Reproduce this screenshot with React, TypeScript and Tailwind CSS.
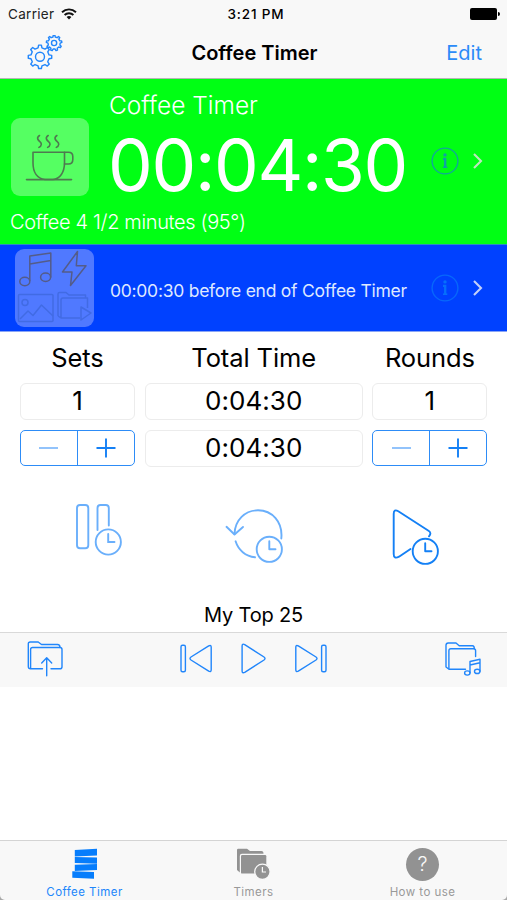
import type { ReactNode } from "react";

const BLUE = "#2186fb";

function gearPath(cx: number, cy: number, outer: number, inner: number, teeth: number) {
  const pts: string[] = [];
  const step = (Math.PI * 2) / teeth;
  const at = (r: number, a: number) => `${(cx + r * Math.cos(a)).toFixed(2)} ${(cy + r * Math.sin(a)).toFixed(2)}`;
  for (let i = 0; i < teeth; i++) {
    const a = i * step - Math.PI / 2;
    pts.push(at(inner, a - step * 0.27), at(outer, a - step * 0.15), at(outer, a + step * 0.15), at(inner, a + step * 0.27));
  }
  return `M${pts.join("L")}Z`;
}

function GearsIcon() {
  return (
    <svg width="36" height="36" viewBox="27 34 36 36" fill="none" stroke={BLUE} strokeWidth="1.4" strokeLinejoin="round">
      <path d={gearPath(40, 55.8, 11.8, 9.2, 8)} />
      <circle cx="40" cy="55.8" r="4.5" />
      <path d={gearPath(54.1, 42, 7.8, 6.1, 9)} />
      <circle cx="54.1" cy="42" r="2.6" />
    </svg>
  );
}

function WifiIcon() {
  return (
    <svg width="16" height="12" viewBox="0 0 16 12" fill="none" stroke="#111" strokeWidth="1.9">
      <path d="M1 4.2C5 .4 11 .4 15 4.2" />
      <path d="M3.6 7C6 4.6 10 4.6 12.4 7" />
      <path d="M8 11.4 5.6 9C7 7.7 9 7.7 10.4 9Z" fill="#111" stroke="none" />
    </svg>
  );
}

function CoffeeIcon() {
  return (
    <svg width="78" height="78" viewBox="0 0 78 78" fill="none" stroke="#4f7a50" strokeWidth="1.6" strokeLinecap="round" strokeLinejoin="round">
      <path d="M22 34.2H53.5V45C53.5 54 49 61 42 61.5H34C26 60.5 22 54 22 45Z" />
      <path d="M53.5 34.2H57.5Q61.8 34.2 61.8 38.5V41.5Q61.8 46 57.5 46H53.5" />
      <path d="M15.5 61.6H60.5" />
      <path d="M28.5 17.5c-3.8 2.5-1 5 .6 6.3s2 4-1.2 5.6" />
      <path d="M37.2 17.5c-3.8 2.5-1 5 .6 6.3s2 4-1.2 5.6" />
      <path d="M45.9 17.5c-3.8 2.5-1 5 .6 6.3s2 4-1.2 5.6" />
    </svg>
  );
}

function MediaIcon() {
  return (
    <svg width="79" height="78" viewBox="0 0 79 78" fill="none" strokeWidth="1.5" strokeLinejoin="round">
      <g stroke="#545c88">
        <ellipse cx="9.8" cy="32.5" rx="5" ry="4.2" />
        <ellipse cx="30.6" cy="28.3" rx="5" ry="4.2" />
        <path d="M14.8 32V7L35.8 4V28.5M14.8 15L35.8 11.6" />
        <path d="M62.5 2.5 47.5 23H57L55.5 36.5 71 16.8H61.3Z" />
      </g>
      <g stroke="#416be4">
        <rect x="3.5" y="45.5" width="34.5" height="27" rx="1" />
        <circle cx="10" cy="53.5" r="3" />
        <path d="M5 70 13 62 18 66.5 26.5 56 38 67" />
        <path d="M43 67V45Q43 43.5 44.5 43.5H51L54 46H70.5V49H48Q46 49 46 51V69H65M43 67 46 69M70.5 49H72.5V59" />
        <path d="M66 58 76 64 66 71Z" />
      </g>
    </svg>
  );
}

function InfoIcon({ ring, mark }: { ring: string; mark: string }) {
  return (
    <svg width="28" height="28" viewBox="0 0 28 28" fill="none">
      <circle cx="14" cy="14" r="12.9" stroke={ring} strokeWidth="1.4" />
      <circle cx="14" cy="7.9" r="1.7" fill={mark} />
      <path d="M12 11.9H14.2V20.4" stroke={mark} strokeWidth="2.3" />
      <path d="M12 20.2H16.3" stroke={mark} strokeWidth="1.6" />
    </svg>
  );
}

function Chevron({ color }: { color: string }) {
  return (
    <svg width="12" height="18" viewBox="0 0 12 18" fill="none" stroke={color} strokeWidth="2.1">
      <path d="M2 2 9 9 2 16" />
    </svg>
  );
}

function PauseTimerIcon() {
  return (
    <svg width="48" height="54" viewBox="75 502 48 54" fill="none" stroke="#6aaffb" strokeWidth="1.9" strokeLinecap="round">
      <rect x="77" y="505" width="11.3" height="43.2" rx="3" />
      <path d="M97.5 530V508Q97.5 505 100.5 505H105.8Q108.8 505 108.8 508V525.5" />
      <circle cx="108.3" cy="542" r="12.6" />
      <path d="M108.2 534V542H114.5" />
    </svg>
  );
}

function ResetTimerIcon() {
  return (
    <svg width="60" height="56" viewBox="225 508 60 56" fill="none" stroke="#6aaffb" strokeWidth="1.9" strokeLinecap="round" strokeLinejoin="round">
      <path d="M234.5 534C235 520 245 510.3 258 510.3C272 510.3 283 522 281.3 538.5" />
      <path d="M226.5 526.8 234.5 534.5 243 527" />
      <path d="M235.6 541.3C238.3 550 245.5 556.3 255 557.3" />
      <circle cx="269.3" cy="549.3" r="12.6" />
      <path d="M269.3 541.3V549.3H275.5" />
    </svg>
  );
}

function PlayTimerIcon() {
  return (
    <svg width="50" height="58" viewBox="391 508 50 58" fill="none" stroke="#1480f5" strokeWidth="1.9" strokeLinecap="round" strokeLinejoin="round">
      <path d="M410.5 549 399 556.7Q393.7 559.5 393.7 554V514Q393.7 508.6 398.3 511.3L428.5 530.8Q432 533 429 536.3" />
      <circle cx="425.3" cy="551.3" r="12.6" />
      <path d="M425.2 543.3V551.3H431.5" />
    </svg>
  );
}

function UploadFolderIcon() {
  return (
    <svg width="38" height="38" viewBox="26 640 38 38" fill="none" stroke={BLUE} strokeWidth="1.4" strokeLinecap="round" strokeLinejoin="round">
      <path d="M42.5 668.8H30.5Q28.3 668.8 28.3 666.5V643.8Q28.3 642 30.2 642H38.2L41.5 644.5H57.5Q60 644.5 60 647.5" />
      <path d="M30.6 668V649.5Q30.6 647.5 32.6 647.5H60Q62 647.5 62 649.5V666.7Q62 668.8 60 668.8H51" />
      <path d="M46.7 675.8V658M41.7 663 46.7 657.8 51.7 663" />
    </svg>
  );
}

function PreviousIcon() {
  return (
    <svg width="34" height="30" viewBox="180 644 34 30" fill="none" stroke={BLUE} strokeWidth="1.4" strokeLinejoin="round">
      <rect x="182" y="645.3" width="4.4" height="26.4" rx="1.5" />
      <path d="M209.7 645.9 192 657Q190 658.5 192 660L209.7 671.2Q212.2 672.5 212.2 669.7V647.2Q212.2 644.6 209.7 645.9Z" />
    </svg>
  );
}

function PlayIcon() {
  return (
    <svg width="27" height="32" viewBox="241 643 27 32" fill="none" stroke={BLUE} strokeWidth="1.4" strokeLinejoin="round">
      <path d="M245.7 644.6 265 657Q267 658.5 265 660L245.7 672.4Q243.1 673.6 243.1 671V646Q243.1 643.3 245.7 644.6Z" />
    </svg>
  );
}

function NextIcon() {
  return (
    <svg width="34" height="30" viewBox="294 644 34 30" fill="none" stroke={BLUE} strokeWidth="1.4" strokeLinejoin="round">
      <path d="M298.3 645.9 316 657Q318 658.5 316 660L298.3 671.2Q295.8 672.5 295.8 669.7V647.2Q295.8 644.6 298.3 645.9Z" />
      <rect x="321.6" y="645.3" width="4.4" height="26.4" rx="1.5" />
    </svg>
  );
}

function MusicFolderIcon() {
  return (
    <svg width="40" height="38" viewBox="443 640 40 38" fill="none" stroke={BLUE} strokeWidth="1.4" strokeLinecap="round" strokeLinejoin="round">
      <path d="M465.5 669.3H449L446 667V645.3Q446 643 448.3 643H456L459.2 645.7H472.5Q474.3 645.7 474.3 648.7" />
      <path d="M448.9 668.5V650.7Q448.9 648.7 450.9 648.7H473.6Q475.6 648.7 475.6 650.7V656.5" />
      <path d="M470 672.8V661.5L480 659.3V671.2M470 665 480 662.8" />
      <ellipse cx="467.3" cy="673" rx="2.7" ry="2.1" />
      <ellipse cx="477.2" cy="671.4" rx="2.7" ry="2.1" />
    </svg>
  );
}

function StackIcon() {
  return (
    <svg width="28" height="32" viewBox="70 847 28 32" fill="#067dfc">
      <path d="M73.8 849 96 847.8V854.4L73.8 855.4Z" />
      <path d="M73.8 855.9 96 856.5V862.7L73.8 861.9Z" />
      <path d="M73.8 863.8 96 862.9V869L73.8 870Z" />
      <path d="M71.3 870.3 93 871.1V877.8L71.3 876.8Z" />
    </svg>
  );
}

function TimersIcon() {
  return (
    <svg width="34" height="34" viewBox="237 847 34 34" fill="#929292">
      <path d="M237 850Q237 848.7 238.3 848.7H247L250 851H261.5Q263.5 851 263.5 853.8H242Q239.8 853.8 239.8 856V872.5L237 870Z" />
      <rect x="241" y="855" width="25.3" height="18.6" rx="1.2" />
      <circle cx="262.4" cy="871.8" r="7.7" stroke="#f8f8f8" strokeWidth="1.3" />
      <path d="M262.4 867V872H266" fill="none" stroke="#f8f8f8" strokeWidth="1.2" />
    </svg>
  );
}

function HelpIcon() {
  return (
    <div className="flex h-[33px] w-[33px] items-center justify-center rounded-full bg-[#929292] text-[20px] font-light text-[#f8f8f8]">
      ?
    </div>
  );
}

function Heading({ children }: { children: ReactNode }) {
  return <div className="h-[34px] text-center text-[25.5px] leading-[38px] tracking-[-0.1px]">{children}</div>;
}

function Field({ children }: { children: ReactNode }) {
  return (
    <div className="flex h-[37px] items-center justify-center rounded-[6px] border border-[#ececec] pb-[2px] text-[26px] tracking-[0.05px]">
      {children}
    </div>
  );
}

function Stepper() {
  return (
    <div className="grid h-[36px] grid-cols-2 rounded-[5px] border-[1.5px] border-[#2d8cf7] text-[#1480f5]">
      <button className="flex items-center justify-center border-r border-[#2d8cf7]">
        <span className="h-[2px] w-[19px] bg-[#92c3fb]" />
      </button>
      <button className="flex items-center justify-center">
        <svg width="20" height="20" viewBox="0 0 20 20" stroke="currentColor" strokeWidth="1.9">
          <path d="M.5 10H19.5M10 .5V19.5" />
        </svg>
      </button>
    </div>
  );
}

function Tab({ icon, label, className }: { icon: ReactNode; label: string; className: string }) {
  return (
    <div className={`flex flex-col items-center ${className}`}>
      <div className="flex h-[36px] items-center justify-center">{icon}</div>
      <span className="mt-[2px] text-[11.5px] leading-[16px] tracking-[0.45px]">{label}</span>
    </div>
  );
}

export default function App() {
  return (
    <div className="flex h-[900px] w-[507px] flex-col overflow-hidden bg-[#a8a8a8] font-['Inter','Liberation_Sans',sans-serif] text-black">
      <header className="h-[79px] shrink-0 border-b border-[#b5b5b5] bg-[#f8f8f8]">
        <div className="grid h-[28px] grid-cols-3 items-center pr-[7px] pl-[8px] text-[13px]">
          <div className="flex items-center gap-[7px] text-[#222]">
            <span className="text-[13.5px] tracking-[0.3px]">Carrier</span>
            <WifiIcon />
          </div>
          <div className="pl-[4px] text-center text-[13.5px] font-medium tracking-[0.85px]">3:21 PM</div>
          <div className="flex items-center justify-end gap-px">
            <span className="h-[12px] w-[27px] rounded-[2px] bg-black" />
            <span className="h-[4px] w-[2px] rounded-r bg-black" />
          </div>
        </div>
        <div className="grid h-[49px] grid-cols-3 items-center pr-[25px] pl-[27px]">
          <GearsIcon />
          <h1 className="text-center text-[20px] font-semibold whitespace-nowrap">Coffee Timer</h1>
          <button className="text-right text-[20px] text-[#2b8bf8]">Edit</button>
        </div>
      </header>

      <section className="flex h-[165px] shrink-0 flex-col bg-[#00ff14] text-white">
        <div className="flex h-[128px]">
          <div className="mt-[39px] ml-[11px] h-[78px] w-[78px] shrink-0 rounded-[9px] bg-[#55ff62]">
            <CoffeeIcon />
          </div>
          <div className="ml-[19px] w-[323px] shrink-0 pt-[10px]">
            <div className="pl-px text-[24.5px] leading-[32px] font-light">Coffee Timer</div>
            <div className="text-[71px] leading-[88px] tracking-[-1.35px] whitespace-nowrap">00:04:30</div>
          </div>
          <div className="mt-[34px] flex h-[96px] items-center gap-[13px]">
            <InfoIcon ring="#10a89a" mark="#0fa0a8" />
            <Chevron color="#bfe5c1" />
          </div>
        </div>
        <div className="pl-[10px] text-[20px] leading-[30px] font-light tracking-[-0.35px]">Coffee 4 1/2 minutes (95°)</div>
      </section>

      <section className="flex h-[88px] shrink-0 items-center border-t border-b border-t-[#2a8fc0] border-b-[#8aa5f5] bg-[#0041ff] text-white">
        <div className="ml-[15px] h-[78px] w-[79px] shrink-0 rounded-[9px] bg-[#5079ff]">
          <MediaIcon />
        </div>
        <div className="mt-[6px] ml-[16px] w-[321px] shrink-0 text-[17.5px] tracking-[-0.26px] whitespace-nowrap text-[#dfe8ff]">
          00:00:30 before end of Coffee Timer
        </div>
        <div className="flex items-center gap-[13px]">
          <InfoIcon ring="#0768fb" mark="#0670fb" />
          <Chevron color="#c3d0f8" />
        </div>
      </section>

      <main className="flex flex-1 flex-col bg-white">
        <section className="grid grid-cols-[115px_218px_115px] gap-x-[9.7px] gap-y-[10px] px-[20px] pt-[7px]">
          <Heading>Sets</Heading>
          <Heading>Total Time</Heading>
          <Heading>Rounds</Heading>
          <Field>1</Field>
          <Field>0:04:30</Field>
          <Field>1</Field>
          <Stepper />
          <Field>0:04:30</Field>
          <Stepper />
        </section>

        <section className="mt-[35px] flex h-[64px] items-start justify-between pr-[66px] pl-[75px]">
          <PauseTimerIcon />
          <div className="pt-[6px] pr-[4px]">
            <ResetTimerIcon />
          </div>
          <div className="pt-[6px]">
            <PlayTimerIcon />
          </div>
        </section>

        <div className="mt-[33px] h-[33px] text-center text-[20px] leading-[32px] tracking-[-0.15px]">My Top 25</div>

        <section className="flex h-[55px] items-center justify-between border-t border-[#d9d9d9] bg-[#f8f8f8] pr-[24px] pb-[2px] pl-[26px]">
          <UploadFolderIcon />
          <div className="flex items-center gap-[27px]">
            <PreviousIcon />
            <PlayIcon />
            <NextIcon />
          </div>
          <MusicFolderIcon />
        </section>
      </main>

      <nav className="grid h-[60px] shrink-0 grid-cols-3 rounded-b-[5px] border-t border-[#d4d4d4] bg-[#f8f8f8] pt-[5px]">
        <Tab icon={<StackIcon />} label="Coffee Timer" className="text-[#2186fb]" />
        <Tab icon={<TimersIcon />} label="Timers" className="text-[#999]" />
        <Tab icon={<HelpIcon />} label="How to use" className="text-[#999]" />
      </nav>
    </div>
  );
}
